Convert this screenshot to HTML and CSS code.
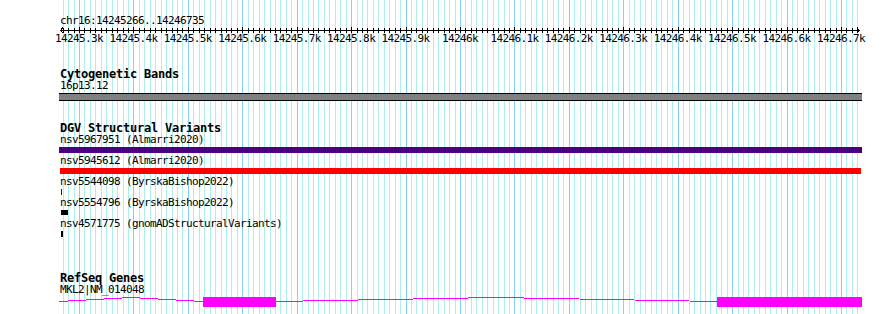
FILE: index.html
```html
<!DOCTYPE html>
<html lang="en">
<head>
  <meta charset="UTF-8">
  <title>chr16:14245266..14246735</title>
  <link rel="stylesheet" href="styles.css">
</head>
<body>
  <div class="browser">
    <svg class="grid" id="grid" width="890" height="314"></svg>

    <div class="tracks">
      <div class="ruler">
        <div class="ref">chr16:14245266..14246735</div>
        <svg class="scale" id="scale" width="803" height="6"></svg>
        <div class="tick-labels">
          <span>14245.3k</span>
          <span>14245.4k</span>
          <span>14245.5k</span>
          <span>14245.6k</span>
          <span>14245.7k</span>
          <span>14245.8k</span>
          <span>14245.9k</span>
          <span>14246k</span>
          <span>14246.1k</span>
          <span>14246.2k</span>
          <span>14246.3k</span>
          <span>14246.4k</span>
          <span>14246.5k</span>
          <span>14246.6k</span>
          <span>14246.7k</span>
        </div>
      </div>

      <div class="track cyto">
        <div class="track-title">Cytogenetic Bands</div>
        <div class="feature">
          <div class="label">16p13.12</div>
          <div class="band"></div>
        </div>
      </div>

      <div class="track dgv">
        <div class="track-title">DGV Structural Variants</div>
        <div class="feature">
          <div class="label">nsv5967951 (Almarri2020)</div>
          <div class="sv sv-loss"></div>
        </div>
        <div class="feature">
          <div class="label">nsv5945612 (Almarri2020)</div>
          <div class="sv sv-gain"></div>
        </div>
        <div class="feature">
          <div class="label">nsv5544098 (ByrskaBishop2022)</div>
          <div class="sv sv-blue"></div>
        </div>
        <div class="feature">
          <div class="label">nsv5554796 (ByrskaBishop2022)</div>
          <div class="sv sv-box"></div>
        </div>
        <div class="feature">
          <div class="label">nsv4571775 (gnomADStructuralVariants)</div>
          <div class="sv sv-tick"></div>
        </div>
      </div>

      <div class="track refseq">
        <div class="track-title">RefSeq Genes</div>
        <div class="feature">
          <div class="label">MKL2|NM_014048</div>
          <svg class="gene" width="803" height="12">
            <polyline points="0,5.5 72,1.5 144,5.5" />
            <polyline points="217,5.5 437.5,1.5 658,5.5" />
            <rect x="144" y="1" width="73" height="10" />
            <rect x="658" y="1" width="145" height="10" />
          </svg>
        </div>
      </div>
    </div>
  </div>

  <script src="script.js"></script>
</body>
</html>
```

FILE: styles.css
```css
body {
  margin: 0;
  background: #fff;
  color: #000;
  font-family: "DejaVu Sans Mono", "Liberation Mono", monospace;
}

.browser {
  position: relative;
  width: 890px;
  height: 314px;
  overflow: hidden;
}

.grid {
  position: absolute;
  top: 0;
  left: 0;
  shape-rendering: crispEdges;
}

.grid .minor {
  stroke: #afeeee;
}

.grid .major {
  stroke: #87cefa;
}

.tracks {
  position: relative;
  width: 803px;
  padding: 15px 0 0 59px;
}

.ref,
.label,
.tick-labels {
  font-size: 11px;
  line-height: 12px;
  height: 12px;
  letter-spacing: -0.62px;
  white-space: nowrap;
  padding-left: 1px;
}

.scale {
  display: block;
  shape-rendering: crispEdges;
}

.scale line,
.scale path {
  stroke: #000;
  stroke-width: 1;
  fill: none;
}

.tick-labels {
  display: flex;
  margin-left: -7.2px;
  padding-left: 0;
}

.tick-labels span {
  flex: 0 0 54.43px;
  text-align: center;
}

.track-title {
  font-size: 12px;
  font-weight: bold;
  line-height: 12px;
  height: 12px;
  letter-spacing: -0.22px;
  white-space: nowrap;
  padding-left: 1px;
}

.cyto {
  margin-top: 23px;
}

.dgv {
  margin-top: 21px;
}

.refseq {
  margin-top: 35px;
}

.band {
  margin-top: 1px;
  height: 6px;
  background: #808080;
  border-top: 1px solid #000;
  border-bottom: 1px solid #000;
}

.sv {
  margin-top: 1px;
  margin-bottom: 2px;
  height: 6px;
}

.sv-loss {
  background: #4b0082;
}

.sv-gain {
  margin-left: 1px;
  width: 801px;
  background: #ff0000;
}

.sv-blue {
  margin-left: 2px;
  width: 1px;
  background: #0000ff;
}

.sv-box {
  margin-left: 2px;
  width: 7px;
  height: 5px;
  margin-bottom: 3px;
  background: #000;
}

.sv-tick {
  margin-left: 2px;
  width: 2px;
  background: #000;
}

.gene {
  display: block;
  shape-rendering: crispEdges;
}

.gene polyline {
  fill: none;
  stroke: #ff00ff;
  stroke-width: 1;
}

.gene rect {
  fill: #ff00ff;
}
```

FILE: script.js
```js
// grid lines every 10bp, darker every 100bp, and the matching ruler ticks
const NS = 'http://www.w3.org/2000/svg';
const grid = document.getElementById('grid');
const scale = document.getElementById('scale');

const firstMajor = 79;      // x of 14245300
const step = 5.443;         // px per 10bp
const left = 59;            // left edge of the track column

function line(parent, x1, y1, x2, y2, cls) {
  const l = document.createElementNS(NS, 'line');
  l.setAttribute('x1', x1);
  l.setAttribute('y1', y1);
  l.setAttribute('x2', x2);
  l.setAttribute('y2', y2);
  if (cls) l.setAttribute('class', cls);
  parent.appendChild(l);
}

for (let k = -3; ; k++) {
  const x = Math.round(firstMajor + step * k);
  if (x > 858) break;
  const major = k % 10 === 0;
  line(grid, x + 0.5, 0, x + 0.5, 314, major ? 'major' : 'minor');

  const sx = x - left + 0.5;
  line(scale, sx, major ? 0 : 1, sx, major ? 6 : 6);
}

// ruler line with arrow heads
line(scale, 1, 3.5, 801, 3.5);
const arrows = document.createElementNS(NS, 'path');
arrows.setAttribute('d', 'M4 0.5 L1.5 3.5 L4 6.5 M798 0.5 L800.5 3.5 L798 6.5');
scale.appendChild(arrows);
```
